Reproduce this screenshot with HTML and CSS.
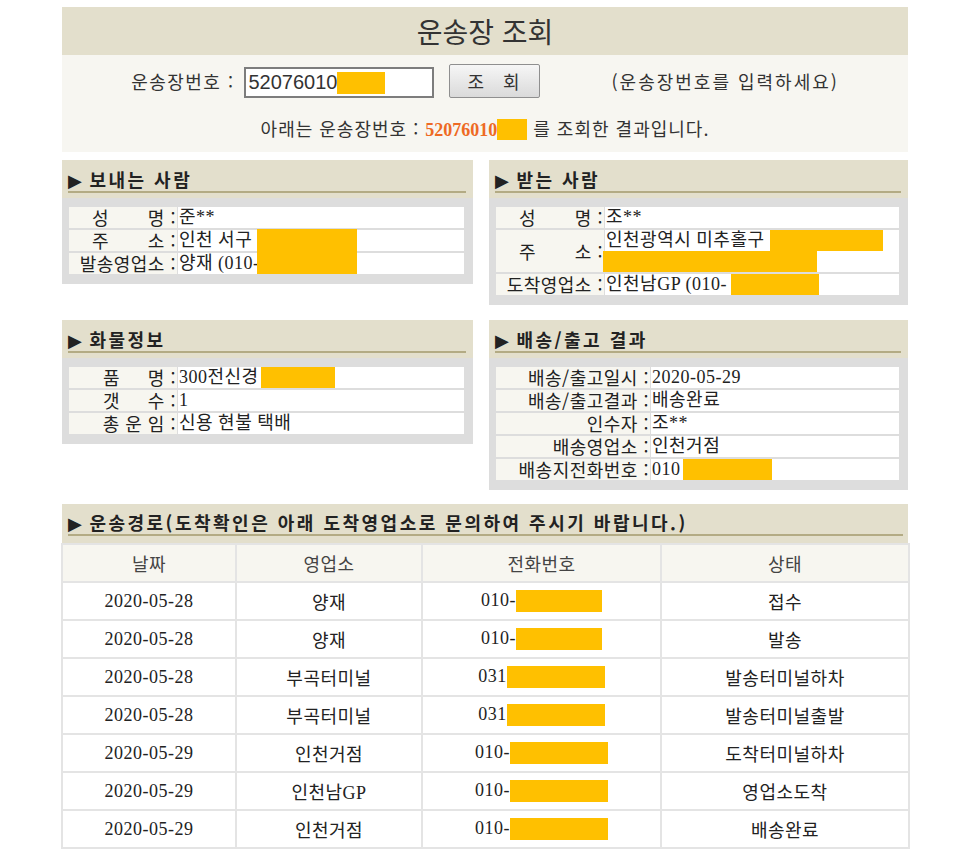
FILE: index.html
```html
<!DOCTYPE html>
<html lang="ko">
<head>
<meta charset="utf-8">
<title>운송장 조회</title>
<link rel="stylesheet" href="styles.css">
</head>
<body>
<div class="page">
  <section class="search">
    <h1 class="search-title">운송장 조회</h1>
    <div class="search-body">
      <div class="search-row">
        <span class="search-label">운송장번호 :</span>
        <div class="search-input">52076010<span class="redact r-input"></span></div>
        <button class="search-btn" type="button">조&nbsp;&nbsp;&nbsp;회</button>
        <span class="search-hint">(운송장번호를 입력하세요)</span>
      </div>
      <p class="search-result">아래는 운송장번호 : <b class="num">52076010</b><span class="redact r-result"></span> 를 조회한 결과입니다.</p>
    </div>
  </section>

  <div class="box-row row-1">
    <section class="box box-left">
      <div class="box-head"><h2 class="box-title"><span class="arrow">▶</span> 보내는 사람</h2></div>
      <div class="box-body">
        <table class="info">
          <tr><th class="lab lab-s">성&nbsp;&nbsp;&nbsp;&nbsp;&nbsp;&nbsp;&nbsp;명 :</th><td class="val">준**</td></tr>
          <tr><th class="lab lab-s">주&nbsp;&nbsp;&nbsp;&nbsp;&nbsp;&nbsp;&nbsp;소 :</th><td class="val val-rel">인천 서구<span class="redact r-sender"></span></td></tr>
          <tr><th class="lab lab-s">발송영업소 :</th><td class="val">양재 (010-</td></tr>
        </table>
      </div>
    </section>
    <section class="box box-right">
      <div class="box-head"><h2 class="box-title"><span class="arrow">▶</span> 받는 사람</h2></div>
      <div class="box-body">
        <table class="info">
          <tr><th class="lab lab-s">성&nbsp;&nbsp;&nbsp;&nbsp;&nbsp;&nbsp;&nbsp;명 :</th><td class="val">조**</td></tr>
          <tr class="tall"><th class="lab lab-s">주&nbsp;&nbsp;&nbsp;&nbsp;&nbsp;&nbsp;&nbsp;소 :</th><td class="val">
            <div class="line">인천광역시 미추홀구 <span class="redact r-addr1"></span></div>
            <div class="line"><span class="redact r-addr2"></span></div>
          </td></tr>
          <tr><th class="lab lab-s">도착영업소 :</th><td class="val">인천남GP (010-<span class="redact r-recv"></span></td></tr>
        </table>
      </div>
    </section>
  </div>

  <div class="box-row row-2">
    <section class="box box-left">
      <div class="box-head"><h2 class="box-title"><span class="arrow">▶</span> 화물정보</h2></div>
      <div class="box-body">
        <table class="info">
          <tr><th class="lab lab-s">품&nbsp;&nbsp;&nbsp;&nbsp;&nbsp;명 :</th><td class="val">300전신경<span class="redact r-item"></span></td></tr>
          <tr><th class="lab lab-s">갯&nbsp;&nbsp;&nbsp;&nbsp;&nbsp;수 :</th><td class="val">1</td></tr>
          <tr><th class="lab lab-s">총 운 임 :</th><td class="val">신용 현불 택배</td></tr>
        </table>
      </div>
    </section>
    <section class="box box-right">
      <div class="box-head"><h2 class="box-title"><span class="arrow">▶</span> 배송/출고 결과</h2></div>
      <div class="box-body">
        <table class="info">
          <tr><th class="lab lab-w">배송/출고일시 :</th><td class="val">2020-05-29</td></tr>
          <tr><th class="lab lab-w">배송/출고결과 :</th><td class="val">배송완료</td></tr>
          <tr><th class="lab lab-w">인수자 :</th><td class="val">조**</td></tr>
          <tr><th class="lab lab-w">배송영업소 :</th><td class="val">인천거점</td></tr>
          <tr><th class="lab lab-w">배송지전화번호 :</th><td class="val">010<span class="redact r-dphone"></span></td></tr>
        </table>
      </div>
    </section>
  </div>

  <section class="box route">
    <div class="box-head"><h2 class="box-title"><span class="arrow">▶</span> 운송경로(도착확인은 아래 도착영업소로 문의하여 주시기 바랍니다.)</h2></div>
    <table class="route-table">
      <colgroup><col class="c1"><col class="c2"><col class="c3"><col class="c4"></colgroup>
      <thead>
        <tr><th>날짜</th><th>영업소</th><th>전화번호</th><th>상태</th></tr>
      </thead>
      <tbody>
        <tr><td>2020-05-28</td><td>양재</td><td>010-<span class="redact r-ph86"></span></td><td>접수</td></tr>
        <tr><td>2020-05-28</td><td>양재</td><td>010-<span class="redact r-ph86"></span></td><td>발송</td></tr>
        <tr><td>2020-05-28</td><td>부곡터미널</td><td>031<span class="redact r-ph98"></span></td><td>발송터미널하차</td></tr>
        <tr><td>2020-05-28</td><td>부곡터미널</td><td>031<span class="redact r-ph98"></span></td><td>발송터미널출발</td></tr>
        <tr><td>2020-05-29</td><td>인천거점</td><td>010-<span class="redact r-ph98"></span></td><td>도착터미널하차</td></tr>
        <tr><td>2020-05-29</td><td>인천남GP</td><td>010-<span class="redact r-ph98"></span></td><td>영업소도착</td></tr>
        <tr><td>2020-05-29</td><td>인천거점</td><td>010-<span class="redact r-ph98"></span></td><td>배송완료</td></tr>
      </tbody>
    </table>
  </section>
</div>
</body>
</html>
```

FILE: styles.css
```css
* { box-sizing: border-box; }
html, body { margin: 0; padding: 0; background: #fff; }
body {
  font-family: "Noto Sans CJK KR", "Liberation Sans", sans-serif;
  font-size: 18px;
  letter-spacing: 0.5px;
  color: #222;
}
.page { width: 846px; margin-left: 62px; padding-top: 7px; padding-bottom: 10px; }

.redact { display: inline-block; background: #ffc000; vertical-align: middle; }

/* search */
.search { background: #f7f6f1; }
.search-title {
  margin: 0; height: 48px; line-height: 48px;
  background: #e3dfcc; text-align: center;
  font-size: 28px; font-weight: normal; color: #333; letter-spacing: 0;
}
.search-body { height: 97px; padding-top: 9px; }
.search-row { display: flex; align-items: center; justify-content: center; height: 34px; }
.search-label { margin-right: 9px; color: #333; letter-spacing: 1.5px; }
.search-input {
  width: 190px; height: 31px; margin-top: 3px;
  border: 2px solid #7d7d7d; background: #fff;
  font-family: "Liberation Sans", sans-serif; font-size: 20px; letter-spacing: 0; color: #333;
  padding-left: 3px; display: flex; align-items: center;
}
.r-input { width: 48px; height: 22px; }
.search-btn {
  width: 91px; height: 34px; margin-left: 15px; padding: 0;
  border: 1px solid #8f8f8f; border-radius: 2px;
  background: linear-gradient(#f6f6f6, #dadada);
  font-family: "Noto Sans CJK KR", sans-serif; font-size: 18px; color: #333; letter-spacing: 1px;
}
.search-hint { margin-left: 72px; color: #333; letter-spacing: 2px; }
.search-result { margin: 20px 0 0; line-height: 20px; text-align: center; color: #333; letter-spacing: 1px; }
.num { font-family: "Liberation Serif", serif; font-size: 18px; color: #ee6a24; letter-spacing: 0; }
.r-result { width: 30px; height: 21px; margin-top: -3px; }

/* boxes */
.box-row { display: flex; gap: 16px; align-items: flex-start; }
.row-1 { margin-top: 8px; }
.row-2 { margin-top: 15px; }
.box-left { width: 411px; }
.box-right { width: 419px; }
.box-head { background: #e3dfcc; height: 38px; padding: 0 7px 0 6px; }
.box-title {
  margin: 0; padding-top: 9px; line-height: 20px;
  border-bottom: 2px solid #b3ab84;
  font-size: 18px; font-weight: bold; color: #222; letter-spacing: 2.5px;
  white-space: nowrap;
}
.arrow { font-family: "DejaVu Sans", sans-serif; font-size: 18px; letter-spacing: 0; }
.box-body { background: #dddddd; padding: 7px 8px 8px 6px; }

.info { width: 100%; border-collapse: separate; border-spacing: 1px 2px; }
.info th, .info td { height: 21px; padding: 0; line-height: 21px; vertical-align: middle; }
.lab { background: #f7f6f0; font-weight: normal; text-align: right; padding-right: 1px !important; white-space: nowrap; color: #222; }
.lab-s { width: 108px; }
.lab-w { width: 154px; }
.val { background: #fff; text-align: left; padding-left: 1px !important; font-family: "Liberation Serif", "Noto Sans CJK KR", serif; white-space: nowrap; }
.val-rel { position: relative; }
.tall th, .tall td { height: 42px; }
.line { height: 21px; line-height: 21px; }
.r-sender { position: absolute; left: 79px; top: -1px; width: 100px; height: 45px; }
.r-addr1 { width: 113px; height: 21px; vertical-align: top; }
.r-addr2 { width: 214px; height: 21px; margin-left: -3px; vertical-align: top; }
.r-recv { width: 88px; height: 21px; margin-left: 4px; vertical-align: top; }
.r-item { width: 74px; height: 21px; margin-left: 2px; vertical-align: top; }
.r-dphone { width: 89px; height: 21px; margin-left: 2px; vertical-align: top; }

/* route */
.route { margin-top: 14px; width: 846px; }
.route .box-head { height: 39px; padding: 0 5px 0 6px; }
.route .box-title { padding-top: 8px; }
.route-table {
  width: 847px; margin-left: -1px;
  border-collapse: collapse; table-layout: fixed;
  font-family: "Liberation Serif", "Noto Sans CJK KR", serif;
}
.c1 { width: 174px; }
.c2 { width: 186px; }
.c3 { width: 239px; }
.c4 { width: 248px; }
.route-table th, .route-table td {
  height: 38px; padding: 0; text-align: center; vertical-align: middle;
  border: 2px solid #e4e4e4; white-space: nowrap;
}
.route-table th { background: #f7f6f0; font-weight: normal; color: #444; font-family: "Noto Sans CJK KR", sans-serif; }
.route-table td { background: #fff; color: #222; }
.r-ph86 { width: 86px; height: 22px; }
.r-ph98 { width: 98px; height: 22px; }
```
